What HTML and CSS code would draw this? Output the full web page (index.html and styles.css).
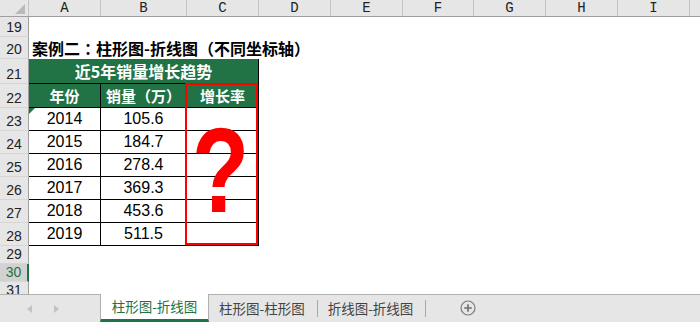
FILE: index.html
```html
<!DOCTYPE html>
<html lang="zh">
<head>
<meta charset="utf-8">
<title>柱形图-折线图</title>
<link rel="stylesheet" href="styles.css">
</head>
<body>
<div class="sheet">
  <div class="colhdr">
    <div class="corner"><span class="tri"></span></div>
    <div class="ch">A</div><div class="ch">B</div><div class="ch">C</div><div class="ch">D</div><div class="ch">E</div><div class="ch">F</div><div class="ch">G</div><div class="ch">H</div><div class="ch">I</div><div class="ch end"></div>
  </div>
  <div class="row r19"><div class="rh">19</div></div>
  <div class="row r20"><div class="rh">20</div><div class="title">案例二<span class="punct">：</span>柱形图-折线图（不同坐标轴）</div></div>
  <div class="row r21"><div class="rh">21</div><div class="cell hd merged">近5年销量增长趋势</div></div>
  <div class="row r22"><div class="rh">22</div><div class="cell hd">年份</div><div class="cell hd">销量（万）</div><div class="cell hd">增长率</div></div>
  <div class="row rd"><div class="rh">23</div><div class="cell num flag">2014</div><div class="cell num">105.6</div><div class="cell num"></div></div>
  <div class="row rd"><div class="rh">24</div><div class="cell num">2015</div><div class="cell num">184.7</div><div class="cell num"></div></div>
  <div class="row rd"><div class="rh">25</div><div class="cell num">2016</div><div class="cell num">278.4</div><div class="cell num"></div></div>
  <div class="row rd"><div class="rh">26</div><div class="cell num">2017</div><div class="cell num">369.3</div><div class="cell num"></div></div>
  <div class="row rd"><div class="rh">27</div><div class="cell num">2018</div><div class="cell num">453.6</div><div class="cell num"></div></div>
  <div class="row rd"><div class="rh">28</div><div class="cell num">2019</div><div class="cell num">511.5</div><div class="cell num"></div></div>
  <div class="row r29"><div class="rh">29</div></div>
  <div class="row r29"><div class="rh sel">30</div></div>
  <div class="row r29"><div class="rh">31</div></div>
  <div class="redbox"></div>
  <div class="qmark">?</div>
</div>
<div class="tabbar">
  <div class="nav"><span class="arr left"></span><span class="arr right"></span></div>
  <div class="tab active">柱形图-折线图</div>
  <div class="tab">柱形图-柱形图</div>
  <div class="sep"></div>
  <div class="tab">折线图-折线图</div>
  <div class="sep"></div>
  <div class="add">
    <svg width="16" height="16" viewBox="0 0 16 16"><circle cx="8" cy="8" r="7" fill="none" stroke="#7a7a7a" stroke-width="1.2"/><path d="M8 4.2V11.8M4.2 8H11.8" stroke="#6e6e6e" stroke-width="1.6"/></svg>
  </div>
</div>
</body>
</html>
```

FILE: styles.css
```css
* { box-sizing: border-box; }
html, body { margin: 0; padding: 0; }
body {
  width: 700px;
  height: 322px;
  overflow: hidden;
  background: #fff;
  font-family: "Liberation Sans", "Noto Sans CJK SC", sans-serif;
}
.sheet {
  position: relative;
  height: 294px;
  overflow: hidden;
}
.colhdr {
  display: grid;
  grid-template-columns: 29px 72px 86px 72px 72px 72px 71px 72px 72px 72px 1fr;
  height: 17px;
  background: #e6e6e6;
  border-bottom: 1px solid #9f9f9f;
}
.corner {
  position: relative;
  border-right: 1px solid #c4c4c4;
}
.corner .tri {
  position: absolute;
  right: 3px;
  bottom: 2px;
  width: 0;
  height: 0;
  border-left: 10px solid transparent;
  border-bottom: 10px solid #b9b9b9;
}
.ch {
  border-right: 1px solid #c4c4c4;
  font-family: "Liberation Mono", monospace;
  font-size: 14px;
  line-height: 16px;
  text-align: center;
  color: #222;
}
.ch.end { border-right: none; }
.row {
  display: grid;
  grid-template-columns: 29px 72px 86px 72px 1fr;
}
.r19 { height: 20px; }
.r20 { height: 22px; }
.r21 { height: 25px; }
.r22 { height: 24px; }
.rd { height: 23px; }
.r29 { height: 18px; }
.rh {
  background: #e6e6e6;
  border-right: 1px solid #9f9f9f;
  border-bottom: 1px solid #d6d6d6;
  font-size: 14px;
  color: #222;
  text-align: center;
  display: flex;
  align-items: flex-end;
  justify-content: center;
  padding-bottom: 1px;
  line-height: 16px;
}
.rh.sel {
  background: #d2d2d2;
  color: #217346;
  border-right: 2px solid #217346;
}
.title {
  grid-column: 2 / -1;
  font-family: "Noto Sans CJK SC", sans-serif;
  font-weight: bold;
  font-size: 16px;
  line-height: 20px;
  color: #000;
  padding-left: 3px;
  display: flex;
  align-items: flex-end;
  padding-bottom: 1px;
  white-space: nowrap;
}
.punct { font-family: "Noto Sans CJK TC", sans-serif; }
.cell {
  border-right: 1px solid #000;
  border-bottom: 1px solid #000;
  display: flex;
  align-items: center;
  justify-content: center;
  white-space: nowrap;
}
.hd {
  background: #217346;
  color: #fff;
  font-family: "Noto Sans CJK SC", sans-serif;
  font-weight: bold;
  font-size: 15px;
}
.merged {
  grid-column: 2 / 5;
  font-size: 16px;
}
.num {
  font-family: "Liberation Sans", sans-serif;
  font-size: 16px;
  color: #000;
  position: relative;
}
.flag::before {
  content: "";
  position: absolute;
  left: 0;
  top: 0;
  border-top: 6px solid #217346;
  border-right: 6px solid transparent;
}
.redbox {
  position: absolute;
  left: 185px;
  top: 83px;
  width: 73px;
  height: 162px;
  border: 2px solid #ff0000;
}
.qmark {
  position: absolute;
  left: 184px;
  top: 125px;
  width: 72px;
  height: 90px;
  text-align: center;
  font-family: "Liberation Sans", sans-serif;
  font-weight: bold;
  font-size: 120px;
  line-height: 90px;
  color: #ff0000;
  transform: scaleX(0.78);
  transform-origin: 36px 0;
}
.tabbar {
  display: flex;
  align-items: stretch;
  height: 28px;
  background: #e6e6e6;
  border-top: 1px solid #b0b0b0;
  font-family: "Noto Sans CJK SC", sans-serif;
  font-size: 13.5px;
  color: #444;
}
.nav {
  width: 100px;
  display: flex;
  align-items: center;
  padding-left: 27px;
  gap: 22px;
}
.arr {
  width: 0;
  height: 0;
  border-top: 4px solid transparent;
  border-bottom: 4px solid transparent;
}
.arr.left { border-right: 5px solid #c2c2c2; }
.arr.right { border-left: 5px solid #c2c2c2; }
.tab {
  display: flex;
  align-items: center;
  padding: 0 12px 2px 10px;
  white-space: nowrap;
}
.tab.active {
  width: 109px;
  justify-content: center;
  padding: 0 0 1px;
  margin-top: -1px;
  background: #fff;
  color: #217346;
  border-left: 1px solid #b0b0b0;
  border-right: 1px solid #b0b0b0;
  border-bottom: 3px solid #217346;
}
.sep {
  width: 1px;
  margin: 5px 0 5px;
  background: #a8a8a8;
}
.add {
  display: flex;
  align-items: center;
  padding-left: 34px;
  padding-bottom: 1px;
}
```
